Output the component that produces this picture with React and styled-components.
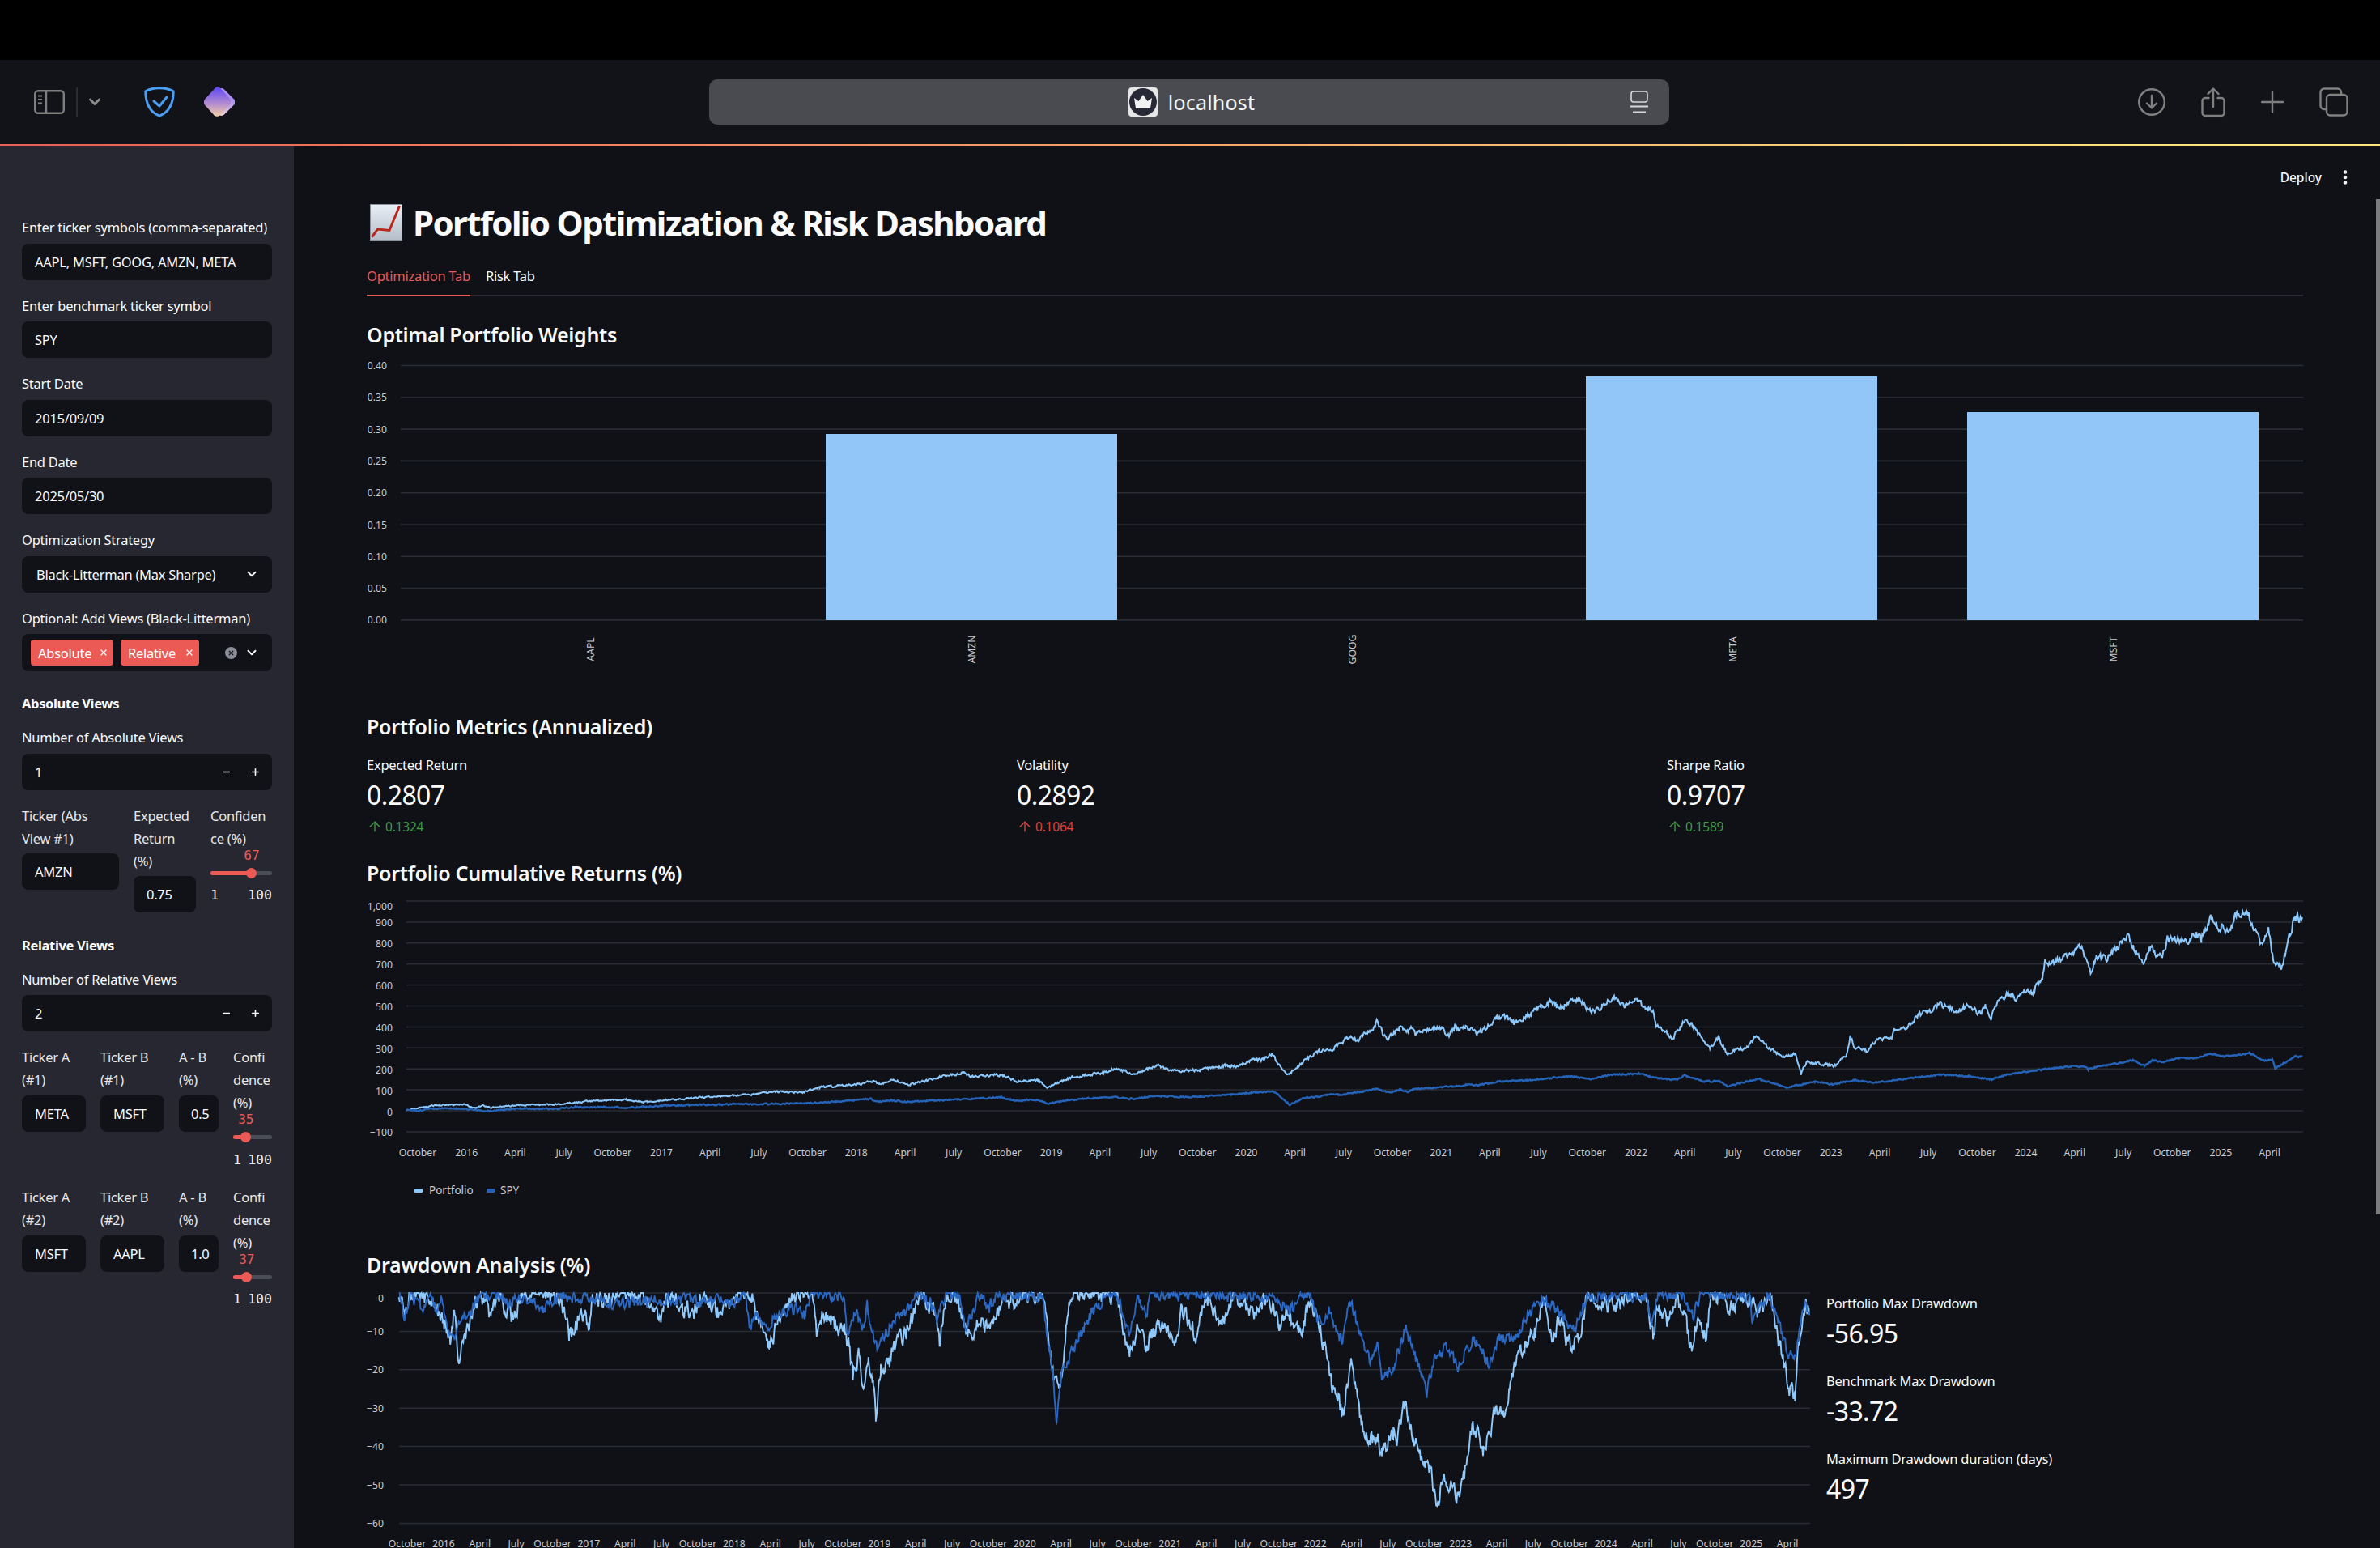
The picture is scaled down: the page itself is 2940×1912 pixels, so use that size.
import React from 'react';
import styled, { createGlobalStyle } from 'styled-components';
import { ArrowUp, ChevronDown, Minus, Plus, X } from 'lucide-react';

const FONT = `"Noto Sans", "Open Sans", sans-serif`;
const MONO = `"DejaVu Sans Mono", "Liberation Mono", monospace`;
const RED = '#ec5a56';

const GlobalStyle = createGlobalStyle`
  html, body {
    margin: 0;
    background: #000;
    overflow: hidden;
  }
  * {
    box-sizing: border-box;
  }
`;

const Page = styled.div`
  width: 2940px;
  height: 1912px;
  display: flex;
  flex-direction: column;
  overflow: hidden;
  font-family: ${FONT};
  color: #fafafa;
  background: #000;
`;

const BlackBar = styled.div`
  height: 74px;
  flex: none;
`;

/* browser chrome */
const Toolbar = styled.header`
  height: 106px;
  flex: none;
  display: grid;
  grid-template-columns: 876px 1186px 1fr;
  align-items: center;
  background: #121318;
  position: relative;
  border-bottom: 2px solid;
  border-image: linear-gradient(90deg, #ec5f55 0%, #f6a56b 50%, #fde27c 90%, #ffe680 100%) 1;
`;

const ToolLeft = styled.div`
  display: flex;
  align-items: center;
  padding-left: 42px;
`;

const Divider = styled.span`
  width: 2px;
  height: 36px;
  margin: 0 14px;
  background: #2b2c31;
`;

const UrlBar = styled.div`
  height: 56px;
  border-radius: 10px;
  background: #4a4b50;
  display: flex;
  align-items: center;
  justify-content: center;
  position: relative;
  gap: 13px;
  padding-left: 6px;
`;

const UrlText = styled.span`
  font-size: 25px;
  letter-spacing: 0.2px;
  color: #f5f5f5;
`;

const ReaderSlot = styled.span`
  position: absolute;
  right: 26px;
  top: 14px;
  display: flex;
`;

const ToolRight = styled.div`
  display: flex;
  align-items: center;
  justify-content: flex-end;
  gap: 44px;
  padding-right: 39px;
`;

const Body = styled.div`
  flex: 1;
  min-height: 0;
  display: flex;
`;

/* streamlit sidebar */
const Sidebar = styled.aside`
  width: 363px;
  flex: none;
  padding: 90px 27px 0;
  background: #262730;
  display: flex;
  flex-direction: column;
`;

const Fields = styled.div`
  display: flex;
  flex-direction: column;
  gap: 21px;
`;

const Label = styled.div`
  font-size: 16.5px;
  line-height: 22px;
  letter-spacing: -0.25px;
  color: #fafafa;
  white-space: nowrap;
  margin-bottom: ${p => p.$gap ?? 8.5}px;
`;

const ColumnLabel = styled.div`
  font-size: 16.5px;
  line-height: 28px;
  letter-spacing: -0.25px;
  color: #e8e8ea;
  margin-bottom: ${p => p.$gap ?? 4}px;
`;

const InputBox = styled.div`
  height: 45px;
  border-radius: 8px;
  background: #101218;
  display: flex;
  align-items: center;
  padding: 0 ${p => p.$pad ?? 16}px;
  font-size: 16.5px;
  letter-spacing: -0.25px;
  color: #fafafa;
  white-space: nowrap;
`;

const SelectBox = styled(InputBox)`
  justify-content: space-between;
  padding: 0 16px 0 18px;
`;

const MultiBox = styled(InputBox)`
  height: 46px;
  padding: 0 16px 0 11px;
  gap: 9px;
`;

const Chip = styled.span`
  height: 32px;
  border-radius: 4px;
  background: ${RED};
  display: flex;
  align-items: center;
  justify-content: space-between;
  width: ${p => p.$width}px;
  padding: 0 6px 0 9px;
  color: #fff;
`;

const ClearDot = styled.span`
  width: 15px;
  height: 15px;
  border-radius: 50%;
  background: #8b8d99;
  color: #1a1b22;
  display: flex;
  align-items: center;
  justify-content: center;
  margin-left: auto;
`;

const StepValue = styled.span`
  flex: 1;
`;

const Stepper = styled.span`
  display: flex;
  gap: 23px;
  margin-right: -2px;
`;

const SectionTitle = styled.div`
  font-size: 16.5px;
  line-height: 22px;
  font-weight: 700;
  letter-spacing: -0.35px;
  margin-top: ${p => p.$top}px;
  margin-bottom: 20px;
`;

const ViewRow = styled.div`
  display: grid;
  grid-template-columns: ${p => p.$cols};
  column-gap: 18px;
  align-items: start;
  margin-top: ${p => p.$top}px;
`;

const SliderBox = styled.div`
  margin-top: -1px;
`;

const SliderValue = styled.div`
  width: fit-content;
  margin-left: ${p => p.$pct}%;
  transform: translateX(-50%);
  font-family: ${MONO};
  font-size: 16px;
  line-height: 16px;
  color: ${RED};
`;

const Track = styled.div`
  height: 5px;
  margin-top: 11px;
  border-radius: 3px;
  background: #4a4c57;
  position: relative;
`;

const TrackFill = styled.div`
  height: 100%;
  width: ${p => p.$pct}%;
  border-radius: 3px;
  background: ${RED};
`;

const Thumb = styled.span`
  position: absolute;
  left: ${p => p.$pct}%;
  top: -4px;
  width: 13px;
  height: 13px;
  margin-left: -6.5px;
  border-radius: 50%;
  background: ${RED};
`;

const SliderScale = styled.div`
  display: flex;
  justify-content: space-between;
  margin-top: 15.5px;
  font-family: ${MONO};
  font-size: 16.5px;
  line-height: 20px;
  color: #f0f0f2;
`;

/* main area */
const Main = styled.main`
  flex: 1;
  min-width: 0;
  position: relative;
  padding: 69px 95px 0 90px;
  background: #0f1117;
`;

const DeployBar = styled.div`
  position: absolute;
  top: 28px;
  right: 40px;
  display: flex;
  align-items: center;
  gap: 26px;
  font-size: 15.5px;
  line-height: 22px;
  font-weight: 500;
`;

const ScrollThumb = styled.div`
  position: absolute;
  top: 66px;
  right: 0;
  width: 5px;
  height: 1254px;
  background: #7c7c7c;
`;

const Title = styled.h1`
  margin: 0;
  display: flex;
  align-items: center;
  gap: 13px;
  padding-left: 4px;
  font-size: 42px;
  line-height: 52px;
  font-weight: 700;
  letter-spacing: -1.65px;
  white-space: nowrap;
`;

const Tabs = styled.div`
  margin-top: 15px;
  height: 50px;
  display: flex;
  gap: 19px;
  border-bottom: 2px solid #2a2c33;
`;

const Tab = styled.div`
  height: 50px;
  display: flex;
  align-items: center;
  font-size: 16.5px;
  letter-spacing: -0.25px;
  color: ${p => (p.$active ? RED : '#fafafa')};
  border-bottom: 2px solid ${p => (p.$active ? RED : 'transparent')};
`;

const Heading = styled.h3`
  margin: ${p => p.$top}px 0 0;
  font-size: 25px;
  line-height: 40px;
  font-weight: 600;
  letter-spacing: -0.3px;
`;

const MetricsRow = styled.div`
  margin-top: 17px;
  display: grid;
  grid-template-columns: repeat(3, 1fr);
  column-gap: 17px;
`;

const MetricLabel = styled.div`
  font-size: 16.5px;
  line-height: 22px;
  letter-spacing: -0.25px;
`;

const MetricValue = styled.div`
  margin-top: ${p => p.$top ?? 4}px;
  margin-bottom: ${p => p.$bottom ?? 0}px;
  font-size: 32px;
  line-height: 44px;
  letter-spacing: -0.6px;
`;

const MetricDelta = styled.div`
  margin-top: 6px;
  display: flex;
  align-items: center;
  gap: 3px;
  height: 22px;
  font-size: 15.5px;
  letter-spacing: -0.2px;
  color: ${p => p.$color};
`;

const DrawdownRow = styled.div`
  margin-top: 3px;
  display: flex;
  gap: 20px;
`;

const DrawdownStats = styled.div`
  padding-top: 14px;
`;

const ChartSvg = styled.svg`
  display: block;
  flex: none;
  margin-top: ${p => p.$top ?? 0}px;

  text {
    font-family: ${FONT};
    font-size: 12.2px;
    fill: #c9cacd;
    dominant-baseline: central;
  }
`;

const LegendText = styled.text`
  && {
    font-size: 13.5px;
  }
`;

/* the charts take page pixels for their coordinates, via the viewBox */
const GRID = '#2b2d34';

const rng = seed => () => {
  seed = (seed + 0x6d2b79f5) | 0;
  let t = Math.imul(seed ^ (seed >>> 15), 1 | seed);
  t = (t + Math.imul(t ^ (t >>> 7), 61 | t)) ^ t;
  return ((t ^ (t >>> 14)) >>> 0) / 4294967296 - 0.5;
};

// walks the anchors pixel by pixel and adds daily noise on top
const seriesPath = (anchors, { seed, step = 1, amp, ceil = -Infinity }) => {
  const rand = rng(seed);
  let noise = 0;
  let d = '';
  for (let i = 0; i < anchors.length - 1; i++) {
    const [x0, y0] = anchors[i];
    const [x1, y1] = anchors[i + 1];
    for (let x = x0; x < x1; x += step) {
      const y = y0 + ((y1 - y0) * (x - x0)) / (x1 - x0);
      noise = 0.35 * noise + rand() * amp(y);
      const v = Math.max(ceil, y + noise);
      d += `${d ? 'L' : 'M'}${x.toFixed(1)} ${v.toFixed(1)}`;
    }
  }
  return d;
};

const scale = (ox, oy, sx, sy, pts) => pts.map(([x, y]) => [ox + x / sx, oy + y / sy]);

const quarterLabels = Array.from({ length: 39 }, (_, i) =>
  ['October', String(2016 + (i - 1) / 4), 'April', 'July'][i % 4]
);

const ZERO_Y = 1372;
const portfolioReturns = [
  ...scale(430, 860, 1.425, 2.529, [
    [103, 1293], [150, 1278], [205, 1275], [225, 1287], [238, 1277], [250, 1285], [300, 1277], [370, 1275],
    [420, 1265], [490, 1260], [520, 1268], [560, 1262], [650, 1250], [720, 1243], [745, 1235], [800, 1237],
    [830, 1222], [900, 1212], [925, 1202], [935, 1212], [960, 1198], [985, 1215], [1040, 1190], [1085, 1175],
    [1095, 1188], [1150, 1182], [1180, 1205], [1215, 1200], [1232, 1222], [1270, 1192], [1330, 1175],
    [1350, 1162], [1385, 1180], [1425, 1152], [1450, 1170], [1500, 1168],
  ]),
  ...scale(1500, 1230, 3, 3, [
    [0, 265], [50, 258], [85, 260], [140, 236], [175, 240], [215, 213], [235, 250], [270, 295], [300, 270],
    [340, 235], [400, 200], [440, 195], [470, 175], [500, 150], [535, 170], [555, 135], [590, 125], [605, 90],
    [625, 140], [645, 158], [685, 120], [720, 130], [730, 110], [745, 140], [790, 125], [840, 120], [870, 148],
    [895, 110],
  ]),
  ...scale(1800, 1080, 1.425, 3, [
    [0, 575], [15, 562], [35, 590], [50, 570], [70, 530], [90, 530], [100, 550], [130, 515], [150, 485],
    [165, 470], [175, 490], [190, 485], [205, 462], [215, 465], [235, 510], [255, 490], [275, 455], [295, 490],
    [312, 465], [330, 490], [345, 510], [350, 560], [380, 605], [400, 540], [415, 560], [430, 610], [445, 640],
    [460, 605], [475, 665], [510, 640], [528, 597], [545, 635], [575, 680], [595, 665], [605, 738], [615, 695],
    [650, 705], [665, 710], [685, 670], [692, 600], [700, 640], [720, 655], [740, 610], [765, 600], [770, 575],
    [790, 570], [810, 525], [830, 510], [850, 480], [880, 510], [900, 485], [920, 515], [930, 490], [940, 530],
    [950, 480], [970, 440], [985, 460], [1000, 425], [1012, 440], [1030, 380], [1035, 320], [1055, 325],
    [1075, 300], [1098, 270], [1115, 360], [1125, 305], [1145, 310], [1160, 270], [1180, 230], [1195, 290],
    [1208, 340], [1220, 270], [1240, 310], [1250, 240], [1290, 250], [1300, 215], [1310, 245], [1325, 160],
    [1345, 200], [1360, 210], [1370, 145], [1392, 140], [1405, 200], [1418, 270], [1428, 210], [1438, 330],
    [1452, 345], [1465, 220], [1475, 160], [1488, 170],
  ]),
];

const spyReturns = [
  ...scale(430, 860, 1.425, 2.529, [
    [103, 1293], [120, 1295], [150, 1288], [200, 1288], [245, 1296], [300, 1288], [370, 1288], [400, 1283],
    [490, 1285], [550, 1280], [600, 1276], [760, 1273], [830, 1270], [920, 1258], [935, 1267], [955, 1262],
    [980, 1267], [1060, 1260], [1150, 1253], [1175, 1263], [1210, 1260], [1232, 1273], [1270, 1260],
    [1340, 1252], [1385, 1258], [1420, 1248], [1470, 1252], [1500, 1250],
  ]),
  ...scale(1500, 1230, 3, 3, [
    [0, 368], [60, 366], [140, 358], [220, 354], [280, 403], [330, 380], [380, 375], [440, 362], [470, 368],
    [600, 345], [650, 358], [690, 347], [720, 358], [740, 345], [895, 335],
  ]),
  ...scale(1800, 1080, 1.425, 3, [
    [0, 785], [20, 778], [35, 782], [70, 768], [130, 762], [200, 748], [235, 758], [270, 742], [320, 738],
    [345, 752], [385, 762], [400, 745], [435, 768], [460, 765], [475, 785], [530, 758], [580, 790], [630, 768],
    [660, 778], [700, 762], [730, 772], [850, 742], [900, 748], [940, 760], [970, 740], [1060, 715], [1100, 710],
    [1110, 720], [1190, 688], [1210, 710], [1225, 688], [1240, 695], [1270, 680], [1300, 680], [1325, 665],
    [1350, 675], [1395, 663], [1420, 690], [1435, 685], [1440, 720], [1455, 700], [1475, 675], [1488, 675],
  ]),
];

const portfolioDrawdown = [
  ...scale(430, 1520, 1.307, 3, [
    [82, 235], [92, 300], [100, 240], [130, 240], [145, 300], [155, 340], [165, 420], [172, 280], [178, 470],
    [195, 360], [205, 260], [225, 250], [228, 330], [240, 240], [265, 330], [280, 240], [320, 240], [345, 260],
    [357, 385], [368, 360], [375, 300], [388, 345], [395, 260], [430, 240], [470, 240], [490, 290], [505, 315],
    [520, 240], [540, 285], [560, 300], [570, 240], [605, 320], [620, 240], [650, 240], [660, 300], [680, 430],
    [695, 330], [710, 240], [735, 240], [750, 240], [757, 400], [765, 310], [780, 340], [800, 370], [810, 440],
    [815, 540], [825, 450], [832, 590], [840, 500], [848, 560], [852, 675], [860, 520], [875, 500], [880, 430],
    [900, 380], [915, 300], [925, 235], [945, 290], [955, 405], [965, 250], [985, 240], [995, 360], [1010, 390],
    [1020, 320], [1035, 385], [1050, 300], [1075, 250], [1110, 240], [1122, 235], [1130, 400], [1140, 560],
    [1150, 610], [1160, 330], [1170, 235], [1215, 235], [1240, 235], [1250, 360], [1262, 470], [1275, 350],
    [1288, 430], [1300, 375], [1320, 340], [1335, 430], [1345, 290], [1370, 390], [1385, 250], [1412, 335],
    [1430, 235], [1465, 310], [1485, 235], [1505, 370], [1515, 300], [1535, 370],
  ]),
  ...scale(1600, 1520, 1.568, 3, [
    [15, 350], [30, 250], [50, 380], [60, 460], [70, 560], [82, 620], [92, 680], [108, 460], [125, 680],
    [140, 770], [160, 780], [168, 830], [190, 740], [197, 800], [210, 640], [235, 790], [250, 860], [262, 880],
    [275, 1040], [285, 910], [300, 940], [315, 985], [330, 880], [345, 710], [365, 820], [385, 690], [400, 645],
    [408, 680], [415, 580], [435, 440], [445, 420], [465, 380], [480, 260], [500, 420], [510, 320], [525, 400],
    [550, 420], [565, 240], [600, 280], [625, 270], [660, 240], [680, 240], [693, 400], [700, 290], [720, 330],
    [740, 240], [755, 330], [768, 445], [780, 320], [795, 400], [805, 240], [850, 290], [880, 240], [895, 320],
    [920, 240], [940, 440], [957, 580], [968, 620], [975, 400], [990, 270], [998, 330],
  ]),
];

const spyDrawdown = [
  ...scale(430, 1520, 1.307, 3, [
    [82, 232], [92, 325], [100, 240], [122, 300], [130, 240], [145, 300], [150, 240], [160, 360], [172, 400],
    [185, 330], [205, 280], [215, 240], [240, 240], [260, 270], [280, 240], [315, 290], [335, 260], [350, 240],
    [440, 270], [520, 250], [560, 260], [620, 260], [640, 235], [648, 370], [660, 300], [675, 360], [690, 320],
    [700, 300], [725, 290], [737, 315], [750, 235], [800, 240], [805, 370], [820, 300], [830, 380], [838, 280],
    [845, 370], [855, 430], [870, 370], [885, 320], [905, 290], [920, 235], [940, 270], [950, 320], [965, 240],
    [985, 240], [998, 365], [1010, 290], [1020, 235], [1035, 290], [1045, 235], [1120, 235], [1130, 420],
    [1138, 520], [1144, 710], [1152, 520], [1165, 470], [1180, 400], [1200, 310], [1225, 240], [1240, 235],
    [1250, 300], [1260, 380], [1275, 240], [1290, 300], [1295, 235], [1400, 240], [1420, 240], [1440, 235],
    [1500, 250], [1520, 300], [1535, 260],
  ]),
  ...scale(1600, 1520, 1.568, 3, [
    [15, 240], [30, 240], [45, 340], [65, 300], [90, 410], [105, 260], [125, 370], [145, 490], [160, 410],
    [168, 560], [190, 510], [213, 360], [235, 480], [255, 600], [270, 480], [295, 430], [315, 510], [345, 395],
    [375, 490], [395, 400], [430, 390], [450, 310], [480, 260], [510, 290], [540, 370], [565, 250], [600, 235],
    [680, 240], [690, 340], [705, 235], [750, 235], [770, 320], [785, 235], [880, 235], [885, 320], [915, 235],
    [935, 340], [955, 460], [970, 470], [985, 270], [998, 300],
  ]),
];

const portfolioLine = seriesPath(portfolioReturns, { seed: 11, amp: y => 1.2 + (ZERO_Y - y) * 0.04 });
const spyLine = seriesPath(spyReturns, { seed: 29, amp: () => 1.6 });
const portfolioDdLine = seriesPath(portfolioDrawdown, { seed: 5, amp: () => 20, ceil: 1597 });
const spyDdLine = seriesPath(spyDrawdown, { seed: 77, amp: () => 14, ceil: 1597 });

const WeightsChart = () => {
  const ticks = ['0.40', '0.35', '0.30', '0.25', '0.20', '0.15', '0.10', '0.05', '0.00'];
  const bars = [
    { x: 1020, top: 536 },
    { x: 1959, top: 465 },
    { x: 2430, top: 509 },
  ];
  const names = [['AAPL', 729], ['AMZN', 1200], ['GOOG', 1670], ['META', 2140], ['MSFT', 2610]];
  return (
    <ChartSvg $top={7} width="2392" height="390" viewBox="453 440 2392 390">
      {ticks.map((t, i) => {
        const y = 451.5 + i * 39.3;
        return (
          <g key={t}>
            <line x1="495" x2="2845" y1={y} y2={y} stroke={GRID} strokeWidth="1.6" />
            <text x="478" y={y} textAnchor="end">{t}</text>
          </g>
        );
      })}
      {bars.map(b => (
        <rect key={b.x} x={b.x} y={b.top} width="360" height={766 - b.top} fill="#93c6f8" />
      ))}
      {names.map(([n, x]) => (
        <text key={n} textAnchor="middle" transform={`translate(${x} 802) rotate(-90)`}>{n}</text>
      ))}
    </ChartSvg>
  );
};

const ReturnsChart = () => {
  const ticks = ['1,000', '900', '800', '700', '600', '500', '400', '300', '200', '100', '0', '-100'];
  return (
    <ChartSvg $top={2} width="2392" height="390" viewBox="453 1100 2392 390">
      {ticks.map((t, i) => {
        const y = 1113 + i * 25.9;
        return (
          <g key={t}>
            <line x1="502" x2="2845" y1={y} y2={y} stroke={GRID} strokeWidth="1.5" />
            <text x="485" y={i === 0 ? y + 6 : y + 1} textAnchor="end">{t.replace('-', '−')}</text>
          </g>
        );
      })}
      {quarterLabels.map((l, i) => (
        <text key={i} x={516 + i * 60.2} y="1423" textAnchor="middle">{l}</text>
      ))}
      <path d={portfolioLine} fill="none" stroke="#8cc8fc" strokeWidth="2" />
      <path d={spyLine} fill="none" stroke="#2563b8" strokeWidth="2.4" />
      <rect x="512" y="1468" width="10" height="5" rx="1" fill="#8cc8fc" />
      <LegendText x="530" y="1470">Portfolio</LegendText>
      <rect x="601" y="1468" width="10" height="5" rx="1" fill="#2563b8" />
      <LegendText x="618" y="1470">SPY</LegendText>
    </ChartSvg>
  );
};

const DrawdownChart = () => {
  const ticks = ['0', '-10', '-20', '-30', '-40', '-50', '-60'];
  return (
    <ChartSvg width="1783" height="327" viewBox="453 1585 1783 327">
      {ticks.map((t, i) => {
        const y = 1597 + i * 47.4;
        return (
          <g key={t}>
            <line x1="493" x2="2236" y1={y} y2={y} stroke={GRID} strokeWidth="1.5" />
            <text x="474" y={i === 0 ? y + 6 : y} textAnchor="end">{t.replace('-', '−')}</text>
          </g>
        );
      })}
      {quarterLabels.map((l, i) => (
        <text key={i} x={503 + i * 44.87} y="1906" textAnchor="middle">{l}</text>
      ))}
      <path d={portfolioDdLine} fill="none" stroke="#90cafd" strokeWidth="1.9" />
      <path d={spyDdLine} fill="none" stroke="#2a68c4" strokeWidth="1.9" />
    </ChartSvg>
  );
};

/* toolbar drawings */
const SidebarIcon = () => (
  <svg width="38" height="30" viewBox="0 0 38 30" fill="none" stroke="#7e7e7e" strokeWidth="2.4">
    <rect x="1.2" y="1.2" width="35.6" height="27.6" rx="4" />
    <path d="M15 1v28" />
    <path d="M5 7.5h5M5 12h5M5 16.5h5" strokeWidth="1.8" />
  </svg>
);

const SmallChevron = () => (
  <svg width="14" height="10" viewBox="0 0 14 10" fill="none" stroke="#8c8c8c" strokeWidth="3" strokeLinecap="round" strokeLinejoin="round">
    <path d="M1.5 2 7 7.5 12.5 2" />
  </svg>
);

const ShieldIcon = () => (
  <svg width="38" height="38" viewBox="0 0 38 38" fill="none" stroke="#4a9ff5" strokeWidth="3" strokeLinejoin="round" strokeLinecap="round" style={{ marginLeft: 54 }}>
    <path d="M19 1.8C12.5 1.8 6.5 3.2 1.8 5.8 1.8 20 6 31 19 36.2 32 31 36.2 20 36.2 5.8 31.5 3.2 25.5 1.8 19 1.8Z" />
    <path d="M12 18l7 6 9-11" />
  </svg>
);

const DiamondIcon = () => (
  <svg width="38" height="38" viewBox="0 0 38 38" style={{ marginLeft: 36 }}>
    <defs>
      <linearGradient id="dmBack" x1="0" y1="0" x2="0" y2="1">
        <stop offset="0" stopColor="#a78bf0" />
        <stop offset="1" stopColor="#f0dcd8" />
      </linearGradient>
      <linearGradient id="dmFront" x1="0" y1="0" x2="0" y2="1">
        <stop offset="0" stopColor="#5d46f6" />
        <stop offset="0.55" stopColor="#b08ad0" />
        <stop offset="1" stopColor="#f6cfa4" />
      </linearGradient>
    </defs>
    <rect x="8" y="5.5" width="27" height="27" rx="5" transform="rotate(45 21.5 19)" fill="url(#dmBack)" />
    <path d="M14 1.6a4 4 0 0 1 5.6 0l11 11.4a8 8 0 0 1 0 11.4L19.6 35.4a5 5 0 0 1-7 0L1.6 23.4a6 6 0 0 1 0-8.4Z" fill="url(#dmFront)" />
  </svg>
);

const Favicon = () => (
  <svg width="36" height="36" viewBox="0 0 36 36">
    <rect width="36" height="36" rx="4" fill="#e6e6e6" />
    <circle cx="18" cy="18" r="17" fill="#272a36" />
    <path d="M7 13l5.5 4L18 9l5.5 8 5.5-4-2 13H9Z" fill="#f2f2f2" />
  </svg>
);

const ReaderIcon = () => (
  <svg width="22" height="28" viewBox="0 0 22 28" fill="none" stroke="#d8d8dc">
    <rect x="1" y="1" width="20" height="13" rx="3" strokeWidth="1.6" />
    <path d="M0 19.5h22" strokeWidth="2" />
    <path d="M3 26.5h16" strokeWidth="2" />
  </svg>
);

const chromeStroke = { fill: 'none', stroke: '#808080', strokeWidth: 2.4, strokeLinecap: 'round', strokeLinejoin: 'round' };

const DownloadIcon = () => (
  <svg width="34" height="34" viewBox="0 0 34 34" {...chromeStroke}>
    <circle cx="17" cy="17" r="15.8" />
    <path d="M17 9v15M11 18.5l6 6 6-6" />
  </svg>
);

const ShareIcon = () => (
  <svg width="30" height="37" viewBox="0 0 30 37" {...chromeStroke}>
    <path d="M9.5 13H5a3.5 3.5 0 0 0-3.5 3.5v15A3.5 3.5 0 0 0 5 35h20a3.5 3.5 0 0 0 3.5-3.5v-15A3.5 3.5 0 0 0 25 13h-4.5" />
    <path d="M15 24V2M8.5 8 15 1.5 21.5 8" />
  </svg>
);

const PlusIcon = () => (
  <svg width="28" height="28" viewBox="0 0 28 28" {...chromeStroke}>
    <path d="M14 1v26M1 14h26" />
  </svg>
);

const TabsIcon = () => (
  <svg width="36" height="36" viewBox="0 0 36 36" {...chromeStroke}>
    <path d="M9 27H6a4.5 4.5 0 0 1-4.5-4.5V6A4.5 4.5 0 0 1 6 1.5h16.5A4.5 4.5 0 0 1 27 6v3" />
    <rect x="9" y="9" width="25.5" height="25.5" rx="4.5" />
  </svg>
);

const MoreDots = () => (
  <svg width="6" height="18" viewBox="0 0 6 18" fill="#f0f0f0">
    <circle cx="3" cy="2.5" r="2.3" />
    <circle cx="3" cy="9" r="2.3" />
    <circle cx="3" cy="15.5" r="2.3" />
  </svg>
);

const ChartEmoji = () => (
  <svg width="40" height="46" viewBox="0 0 40 46">
    <defs>
      <linearGradient id="emojiBg" x1="0" y1="0" x2="0" y2="1">
        <stop offset="0" stopColor="#e8eff6" />
        <stop offset="1" stopColor="#b4bcc8" />
      </linearGradient>
    </defs>
    <rect x="0.5" y="0.5" width="39" height="45" fill="url(#emojiBg)" stroke="#8d939c" />
    <path d="M2.5 40.5 9.5 31 24 32.5 36.5 2.5" fill="none" stroke="#b9281c" strokeWidth="3" />
  </svg>
);

/* sidebar parts */
const Slider = ({ value, pct }) => (
  <SliderBox>
    <SliderValue $pct={pct}>{value}</SliderValue>
    <Track>
      <TrackFill $pct={pct} />
      <Thumb $pct={pct} />
    </Track>
    <SliderScale>
      <span>1</span>
      <span>100</span>
    </SliderScale>
  </SliderBox>
);

const NumberStepper = ({ value }) => (
  <InputBox>
    <StepValue>{value}</StepValue>
    <Stepper>
      <Minus size={13} strokeWidth={3} />
      <Plus size={13} strokeWidth={3} />
    </Stepper>
  </InputBox>
);

const textFields = [
  ['Enter ticker symbols (comma-separated)', 'AAPL, MSFT, GOOG, AMZN, META'],
  ['Enter benchmark ticker symbol', 'SPY'],
  ['Start Date', '2015/09/09'],
  ['End Date', '2025/05/30'],
];

const relativeViews = [
  { n: 1, a: 'META', b: 'MSFT', diff: '0.5', conf: 35, pct: 33, top: 18 },
  { n: 2, a: 'MSFT', b: 'AAPL', diff: '1.0', conf: 37, pct: 35, top: 22 },
];

const App = () => {
  return (
    <Page>
      <GlobalStyle />
      <BlackBar />
      <Toolbar>
        <ToolLeft>
          <SidebarIcon />
          <Divider />
          <SmallChevron />
          <ShieldIcon />
          <DiamondIcon />
        </ToolLeft>
        <UrlBar>
          <Favicon />
          <UrlText>localhost</UrlText>
          <ReaderSlot><ReaderIcon /></ReaderSlot>
        </UrlBar>
        <ToolRight>
          <DownloadIcon />
          <ShareIcon />
          <PlusIcon />
          <TabsIcon />
        </ToolRight>
      </Toolbar>
      <Body>
        <Sidebar>
          <Fields>
            {textFields.map(([label, value]) => (
              <div key={label}>
                <Label>{label}</Label>
                <InputBox>{value}</InputBox>
              </div>
            ))}
            <div>
              <Label>Optimization Strategy</Label>
              <SelectBox>
                Black-Litterman (Max Sharpe)
                <ChevronDown size={18} strokeWidth={2.5} />
              </SelectBox>
            </div>
            <div>
              <Label>Optional: Add Views (Black-Litterman)</Label>
              <MultiBox>
                <Chip $width={102}>Absolute <X size={12} strokeWidth={2.5} /></Chip>
                <Chip $width={97}>Relative <X size={12} strokeWidth={2.5} /></Chip>
                <ClearDot><X size={9} strokeWidth={3.5} /></ClearDot>
                <ChevronDown size={18} strokeWidth={2.5} />
              </MultiBox>
            </div>
          </Fields>

          <SectionTitle $top={29}>Absolute Views</SectionTitle>
          <Label>Number of Absolute Views</Label>
          <NumberStepper value="1" />
          <ViewRow $top={18} $cols="120px 77px 76px">
            <div>
              <ColumnLabel>Ticker (Abs<br />View #1)</ColumnLabel>
              <InputBox>AMZN</InputBox>
            </div>
            <div>
              <ColumnLabel>Expected<br />Return<br />(%)</ColumnLabel>
              <InputBox>0.75</InputBox>
            </div>
            <div>
              <ColumnLabel $gap={0}>Confiden<br />ce (%)</ColumnLabel>
              <Slider value={67} pct={67} />
            </div>
          </ViewRow>

          <SectionTitle $top={30}>Relative Views</SectionTitle>
          <Label>Number of Relative Views</Label>
          <NumberStepper value="2" />
          {relativeViews.map(v => (
            <ViewRow key={v.n} $top={v.top} $cols="79px 79px 49px 48px">
              <div>
                <ColumnLabel $gap={5}>Ticker A<br />(#{v.n})</ColumnLabel>
                <InputBox>{v.a}</InputBox>
              </div>
              <div>
                <ColumnLabel $gap={5}>Ticker B<br />(#{v.n})</ColumnLabel>
                <InputBox>{v.b}</InputBox>
              </div>
              <div>
                <ColumnLabel $gap={5}>A - B<br />(%)</ColumnLabel>
                <InputBox $pad={15}>{v.diff}</InputBox>
              </div>
              <div>
                <ColumnLabel $gap={0}>Confi<br />dence<br />(%)</ColumnLabel>
                <Slider value={v.conf} pct={v.pct} />
              </div>
            </ViewRow>
          ))}
        </Sidebar>

        <Main>
          <DeployBar>
            Deploy
            <MoreDots />
          </DeployBar>
          <ScrollThumb />

          <Title>
            <ChartEmoji />
            Portfolio Optimization &amp; Risk Dashboard
          </Title>
          <Tabs>
            <Tab $active>Optimization Tab</Tab>
            <Tab>Risk Tab</Tab>
          </Tabs>

          <Heading $top={27}>Optimal Portfolio Weights</Heading>
          <WeightsChart />

          <Heading $top={47}>Portfolio Metrics (Annualized)</Heading>
          <MetricsRow>
            <div>
              <MetricLabel>Expected Return</MetricLabel>
              <MetricValue>0.2807</MetricValue>
              <MetricDelta $color="#3f9c45"><ArrowUp size={20} strokeWidth={1.6} />0.1324</MetricDelta>
            </div>
            <div>
              <MetricLabel>Volatility</MetricLabel>
              <MetricValue>0.2892</MetricValue>
              <MetricDelta $color="#e0443c"><ArrowUp size={20} strokeWidth={1.6} />0.1064</MetricDelta>
            </div>
            <div>
              <MetricLabel>Sharpe Ratio</MetricLabel>
              <MetricValue>0.9707</MetricValue>
              <MetricDelta $color="#3f9c45"><ArrowUp size={20} strokeWidth={1.6} />0.1589</MetricDelta>
            </div>
          </MetricsRow>

          <Heading $top={26}>Portfolio Cumulative Returns (%)</Heading>
          <ReturnsChart />

          <Heading $top={52}>Drawdown Analysis (%)</Heading>
          <DrawdownRow>
            <DrawdownChart />
            <DrawdownStats>
              <MetricLabel>Portfolio Max Drawdown</MetricLabel>
              <MetricValue $bottom={26}>-56.95</MetricValue>
              <MetricLabel>Benchmark Max Drawdown</MetricLabel>
              <MetricValue $bottom={26}>-33.72</MetricValue>
              <MetricLabel>Maximum Drawdown duration (days)</MetricLabel>
              <MetricValue>497</MetricValue>
            </DrawdownStats>
          </DrawdownRow>
        </Main>
      </Body>
    </Page>
  );
};

export default App;
